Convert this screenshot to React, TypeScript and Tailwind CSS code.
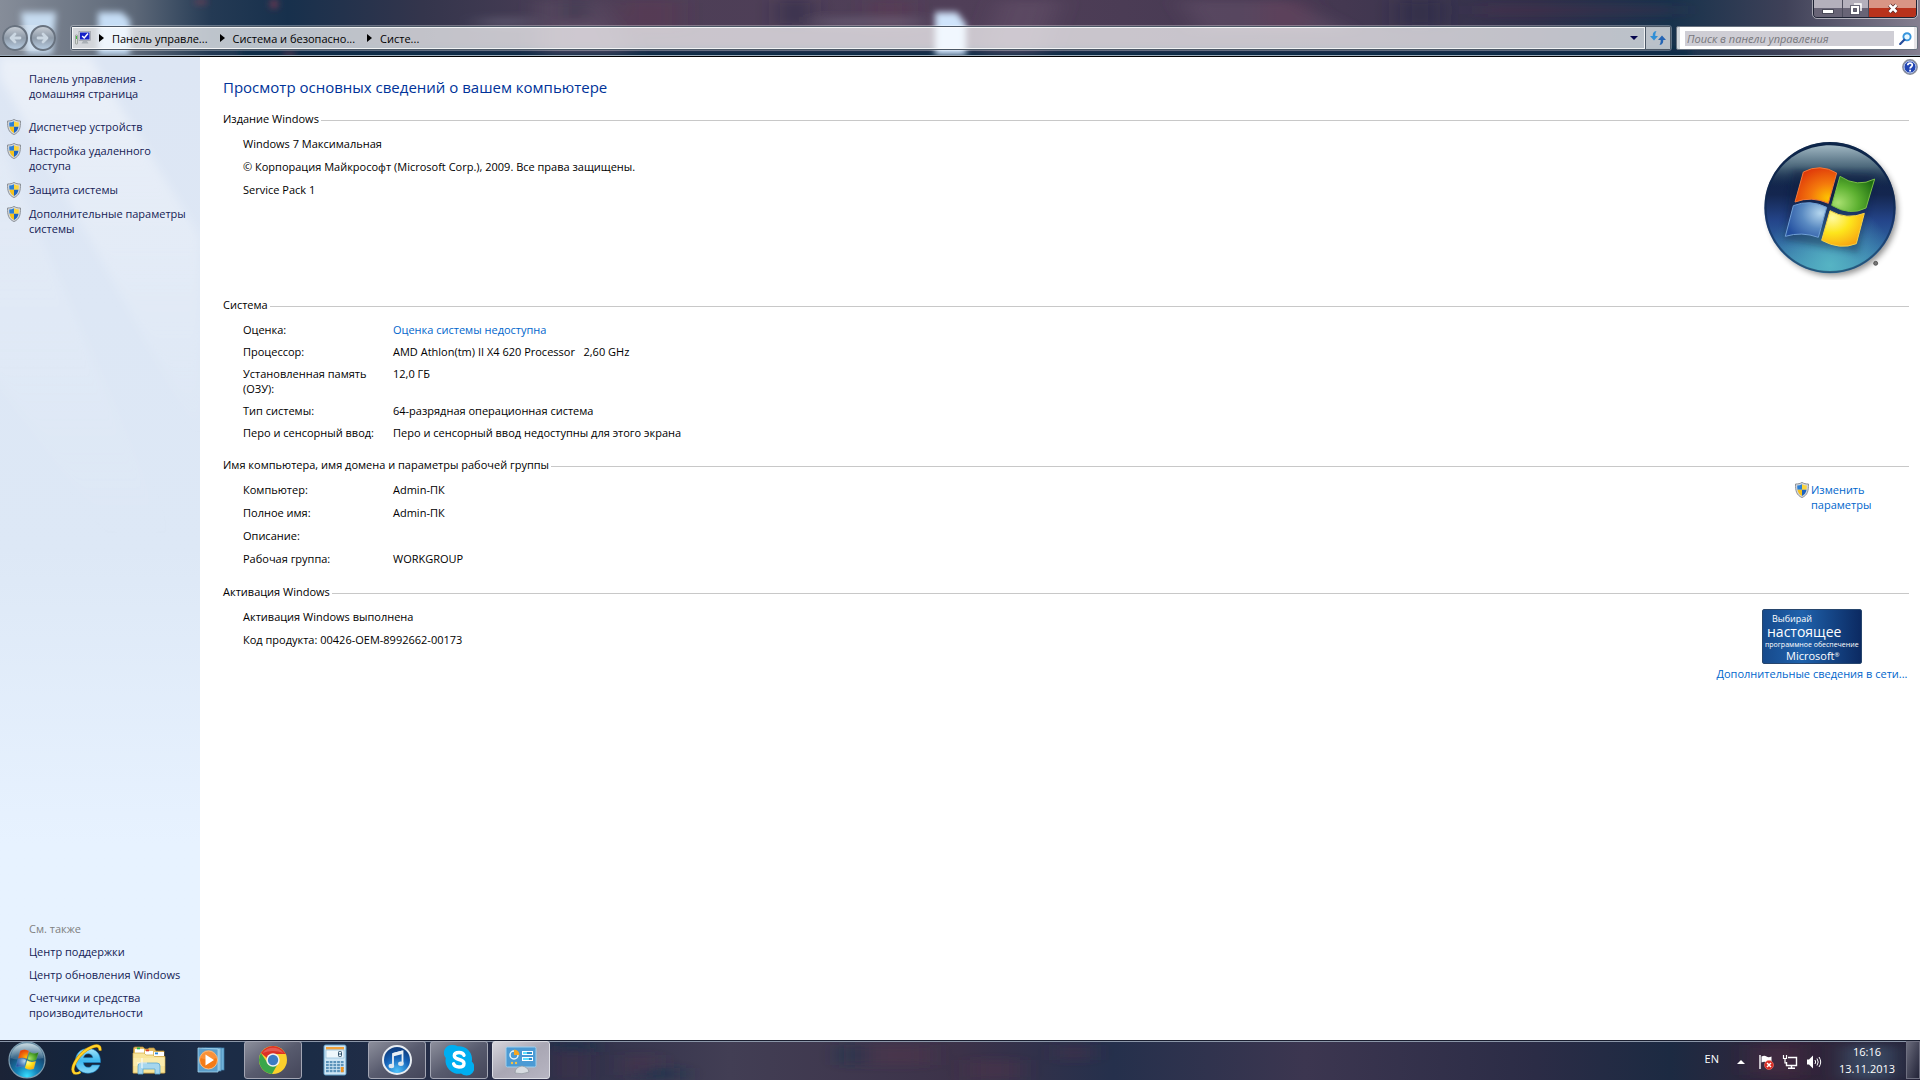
import React from 'react'

interface InfoRow {
  label: string
  value?: React.ReactNode
}

const shieldTasks = [
  'Диспетчер устройств',
  'Настройка удаленного доступа',
  'Защита системы',
  'Дополнительные параметры системы',
]

const seeAlso = ['Центр поддержки', 'Центр обновления Windows', 'Счетчики и средства производительности']

const systemRows: InfoRow[] = [
  { label: 'Оценка:', value: <a href="#rating" className="text-[#0066cc]">Оценка системы недоступна</a> },
  { label: 'Процессор:', value: <>AMD Athlon(tm) II X4 620 Processor &nbsp; 2,60 GHz</> },
  { label: 'Установленная память (ОЗУ):', value: '12,0 ГБ' },
  { label: 'Тип системы:', value: '64-разрядная операционная система' },
  { label: 'Перо и сенсорный ввод:', value: 'Перо и сенсорный ввод недоступны для этого экрана' },
]

const nameRows: InfoRow[] = [
  { label: 'Компьютер:', value: 'Admin-ПК' },
  { label: 'Полное имя:', value: 'Admin-ПК' },
  { label: 'Описание:' },
  { label: 'Рабочая группа:', value: 'WORKGROUP' },
]

/* ---------- icons ---------- */

const Shield: React.FC = () => (
  <svg width="14" height="16" viewBox="0 0 14 16" className="flex-shrink-0">
    <path d="M7 .4C5.300 1.600 3 2 .5 2c0 7 .8 11 6.500 13.600C12.700 13 13.500 9 13.500 2 11 2 8.700 1.600 7 .4z" fill="#d5d8dc" stroke="#85898f" strokeWidth=".9" />
    <path d="M7 2.200C5.600 3 4 3.500 2.200 3.600c0 1.600.1 3 .3 4.200H7z" fill="#2b7fd6" />
    <path d="M7 2.200c1.400.8 3 1.300 4.800 1.400 0 1.600-.1 3-.3 4.200H7z" fill="#fcd53a" />
    <path d="M2.500 7.800c.5 3 1.800 4.800 4.500 6.200V7.800z" fill="#f5c21c" />
    <path d="M11.500 7.800c-.5 3-1.800 4.800-4.500 6.200V7.800z" fill="#1d63c0" />
  </svg>
)

const FlagPanes: React.FC = () => (
  <g>
    <path d="M190 157Q240 130 290 160L265 251Q215 228 165 247Z" fill="url(#paneRed)" stroke="#f2793a" strokeWidth="3" />
    <path d="M300 170Q352 205 404 178L378 265Q330 290 275 257Z" fill="url(#paneGreen)" stroke="#79c043" strokeWidth="3" />
    <path d="M160 258Q210 238 260 263L235 353Q185 335 136 350Z" fill="url(#paneBlue)" stroke="#6f9fd6" strokeWidth="3" />
    <path d="M270 273Q320 302 373 281L349 372Q300 392 245 362Z" fill="url(#paneYellow)" stroke="#f3d24a" strokeWidth="3" />
  </g>
)

const WindowsLogo: React.FC = () => (
  <svg width="144" height="144" viewBox="60 49 432 432" className="flex-shrink-0">
    <defs>
      <radialGradient id="paneRed" cx=".8" cy=".85" r=".9">
        <stop offset="0" stopColor="#fdc500" />
        <stop offset=".45" stopColor="#f47a0c" />
        <stop offset="1" stopColor="#e03a0a" />
      </radialGradient>
      <radialGradient id="paneGreen" cx=".15" cy=".75" r=".95">
        <stop offset="0" stopColor="#a8e070" />
        <stop offset=".5" stopColor="#5cb030" />
        <stop offset="1" stopColor="#1f6e12" />
      </radialGradient>
      <radialGradient id="paneBlue" cx=".85" cy=".3" r=".9">
        <stop offset="0" stopColor="#b4d6ee" />
        <stop offset=".5" stopColor="#5a8ac2" />
        <stop offset="1" stopColor="#2450a0" />
      </radialGradient>
      <radialGradient id="paneYellow" cx=".25" cy=".2" r=".95">
        <stop offset="0" stopColor="#fff9a0" />
        <stop offset=".45" stopColor="#fde51c" />
        <stop offset="1" stopColor="#f79a10" />
      </radialGradient>
      <linearGradient id="logoBody" x1="0" y1="0" x2="0" y2="1">
        <stop offset="0" stopColor="#0c2344" />
        <stop offset=".4" stopColor="#14264f" />
        <stop offset=".6" stopColor="#24458a" />
        <stop offset=".8" stopColor="#3068a2" />
        <stop offset="1" stopColor="#3f8cb4" />
      </linearGradient>
      <radialGradient id="logoGlow" cx=".5" cy=".95" r=".5">
        <stop offset="0" stopColor="#56b4c4" />
        <stop offset="1" stopColor="#56b4c4" stopOpacity="0" />
      </radialGradient>
      <linearGradient id="logoGloss" x1="0" y1="0" x2="0" y2="1">
        <stop offset="0" stopColor="#9fb6c1" />
        <stop offset=".5" stopColor="#4c687b" />
        <stop offset="1" stopColor="#122a4a" stopOpacity="0" />
      </linearGradient>
      <filter id="logoShadow" x="-20%" y="-20%" width="140%" height="140%">
        <feGaussianBlur stdDeviation="9" />
      </filter>
    </defs>
    <circle cx="279" cy="275" r="193" fill="#000" opacity=".45" filter="url(#logoShadow)" />
    <circle cx="270" cy="264" r="197" fill="url(#logoBody)" />
    <circle cx="270" cy="264" r="193" fill="url(#logoGlow)" />
    <circle cx="270" cy="264" r="193" fill="none" stroke="#0f2a50" strokeWidth="6" opacity=".55" />
    <path d="M88 205C118 120 195 77 270 77s152 43 182 128z" fill="url(#logoGloss)" />
    <path d="M160 150L404 165L355 400L130 360Z" fill="#0a1a3e" opacity=".4" filter="url(#logoShadow)" />
    <FlagPanes />
    <circle cx="407" cy="431" r="6" fill="#777" stroke="#333" strokeWidth="2" />
  </svg>
)

const StartOrb: React.FC = () => (
  <svg width="40" height="40" viewBox="0 0 40 40">
    <defs>
      <radialGradient id="orb" cx=".5" cy=".95" r=".85">
        <stop offset="0" stopColor="#37e0ff" />
        <stop offset=".35" stopColor="#1583b8" />
        <stop offset=".75" stopColor="#174a74" />
        <stop offset="1" stopColor="#5d87a0" />
      </radialGradient>
      <linearGradient id="orbGloss" x1="0" y1="0" x2="0" y2="1">
        <stop offset="0" stopColor="#d6e4ea" stopOpacity=".9" />
        <stop offset="1" stopColor="#86a6b8" stopOpacity=".25" />
      </linearGradient>
    </defs>
    <circle cx="20" cy="20" r="18" fill="url(#orb)" stroke="#7f9db0" strokeWidth="1.200" />
    <path d="M3.500 18C4.500 8.500 11 3.200 20 3.200S35.500 8.500 36.500 18C31 20 26 17 20 18.500 14 20 9 20 3.500 18z" fill="url(#orbGloss)" />
    <g transform="translate(-2.600 -2.400) scale(.084)">
      <FlagPanes />
    </g>
  </svg>
)

const ComputerIcon: React.FC = () => (
  <svg width="16" height="14" viewBox="0 0 16 14">
    <rect x=".5" y="4" width="2" height="9" rx=".6" fill="#d8dcd8" stroke="#7b817b" strokeWidth=".6" />
    <rect x="1" y="5" width="1" height="3" fill="#3fbf3f" />
    <rect x="4" y=".5" width="11.500" height="9" fill="#d9dde2" stroke="#8b9098" strokeWidth=".6" />
    <rect x="5" y="1.500" width="9.500" height="7" fill="#1420c8" />
    <path d="M7.200 5l2 2 3.800-4.500" fill="none" stroke="#fff" strokeWidth="1.500" />
    <path d="M8 10h4l1.500 2.500h-7z" fill="#aab0b6" />
  </svg>
)

const Chevron: React.FC = () => (
  <svg width="5" height="8" viewBox="0 0 5 8" className="flex-shrink-0">
    <path d="M0 0l5 4-5 4z" fill="#000" />
  </svg>
)

const RefreshIcon: React.FC = () => (
  <svg width="16" height="16" viewBox="0 0 16 16" className="flex-shrink-0">
    <path d="M6.500 1C3.500 1.200 2.600 3.500 2.800 6H0l4 4.500L8 6H5.300c0-2 .2-3.300 1.200-5z" fill="#2f8fd6" />
    <path d="M9.500 15c3-.2 3.900-2.500 3.700-5H16l-4-4.500L8 10h2.700c0 2-.2 3.300-1.200 5z" fill="#2465b4" />
  </svg>
)

const SearchIcon: React.FC = () => (
  <svg width="13" height="13" viewBox="0 0 13 13" className="flex-shrink-0">
    <circle cx="8" cy="4.800" r="3.600" fill="#e8f7ff" stroke="#3795dd" strokeWidth="1.900" />
    <path d="M5.300 7.800L1.200 12" stroke="#274e9c" strokeWidth="2.200" strokeLinecap="round" />
  </svg>
)

const IEIcon: React.FC = () => (
  <svg width="32" height="32" viewBox="0 0 32 32">
    <defs>
      <linearGradient id="ie" x1="0" y1="0" x2="0" y2="1">
        <stop offset="0" stopColor="#a6e6fb" />
        <stop offset=".5" stopColor="#3db7ee" />
        <stop offset="1" stopColor="#8ad9f8" />
      </linearGradient>
    </defs>
    <path d="M29.500 18.500H12.400c.2 3 2 4.800 4.700 4.800 2 0 3.300-.8 4-2.300h7.700c-1.600 5-6 8.200-11.800 8.200-7.500 0-12.600-5-12.600-12.200S9.600 4.500 17 4.500c8 0 12.900 5.500 12.500 14zM12.500 13.700h9.300c-.3-2.500-2-4-4.600-4-2.500 0-4.200 1.500-4.700 4z" fill="url(#ie)" stroke="#1b86c8" strokeWidth=".6" />
    <path d="M3.800 29.500C-2 25 8 8 21 3c5-2 8.500-1.500 8 3.500" fill="none" stroke="#c98a06" strokeWidth="3.200" />
    <path d="M3.800 29.500C-2 25 8 8 21 3c5-2 8.500-1.500 8 3.500M3.500 29c2 1.200 4 .2 6-1" fill="none" stroke="#ffd42a" strokeWidth="2.200" />
  </svg>
)

const ExplorerIcon: React.FC = () => (
  <svg width="34" height="32" viewBox="0 0 34 32">
    <path d="M1.500 6V4.500Q1.500 3 3 3h8l2 2h3l1-1h5l2 3h8v22H1.500z" fill="#e4bd62" stroke="#b98d35" strokeWidth=".7" />
    <path d="M3 5h9v4H3zM13 7h8v4h-8zM22 8h10v4H22z" fill="#fff" />
    <rect x="5" y="3.500" width="3" height="1.800" fill="#24b54a" />
    <rect x="14" y="5.500" width="3" height="1.800" fill="#dc3c28" />
    <rect x="23" y="8.500" width="3" height="1.800" fill="#2386dc" />
    <path d="M1 9h11l2 2h7l1.500 1.500H33V29H1z" fill="#f8e499" stroke="#d3ac4e" strokeWidth=".7" />
    <path d="M1.500 14h31v8h-31z" fill="#fbeeb4" opacity=".7" />
    <path d="M6 30v-8q0-3 3-3h16q3 0 3 3v8h-5v-5H11v5z" fill="#a5d6ee" stroke="#5ba7cf" strokeWidth=".8" />
    <path d="M10 14v10M5 19h10" stroke="#fff" strokeWidth="1.200" opacity=".8" />
  </svg>
)

const MediaPlayerIcon: React.FC = () => (
  <svg width="28" height="28" viewBox="0 0 28 28">
    <rect x="8" y="2" width="19" height="22" fill="#6fb1d8" stroke="#3f82b0" strokeWidth=".7" />
    <rect x="5" y="2" width="19" height="23" fill="#8fc6e4" stroke="#3f82b0" strokeWidth=".7" />
    <path d="M1 2l20 1v23H1z" fill="#5c9fcb" stroke="#a5d4ee" strokeWidth=".8" />
    <circle cx="11.500" cy="14" r="9" fill="#f47b16" stroke="#ffc48a" strokeWidth=".9" />
    <path d="M3.500 12a8 8 0 0 1 16 0q-8 3-16 0z" fill="#ffa85a" opacity=".5" />
    <path d="M8.500 8.500v11l8.500-5.500z" fill="#fff" />
  </svg>
)

const ChromeIcon: React.FC = () => (
  <svg width="30" height="30" viewBox="0 0 30 30">
    <circle cx="15" cy="15" r="14" fill="#fbd02c" />
    <path d="M2.900 8A14 14 0 0 1 27.100 8L28 9H15a6.400 6.400 0 0 0-6 4z" fill="#dc3226" />
    <path d="M2.900 8A14 14 0 0 0 14 29l6-10.500a6.400 6.400 0 0 1-10.800-1z" fill="#3aa64b" />
    <circle cx="15" cy="15" r="6.700" fill="#f2f2f2" />
    <circle cx="15" cy="15" r="5.200" fill="#3d7cc4" />
    <path d="M4.500 8A13 13 0 0 1 25.500 8Q15 4 4.500 8z" fill="#fff" opacity=".2" />
  </svg>
)

const CalculatorIcon: React.FC = () => (
  <svg width="24" height="32" viewBox="0 0 24 32">
    <rect x="1" y="1" width="22" height="30" rx="1.500" fill="#cfe6f5" stroke="#5e9cc5" />
    <rect x="3" y="3" width="18" height="2.500" fill="#f0a13a" />
    <rect x="3" y="6" width="18" height="8" fill="#eef7fc" stroke="#8bb8d6" strokeWidth=".7" />
    <rect x="15.500" y="7.500" width="3" height="5" rx=".8" fill="none" stroke="#35556e" />
    <path d="M15.500 10h3" stroke="#35556e" />
    {[17, 20, 23, 26].map(y => [3, 6.700, 10.400, 14.100, 17.800].map(x => (
      <rect key={`${x}-${y}`} x={x} y={y} width="2.800" height="2.200" fill="#5c93ba" />
    )))}
    <rect x="17.800" y="23" width="2.800" height="5.200" fill="#f0931e" />
  </svg>
)

const ITunesIcon: React.FC = () => (
  <svg width="32" height="32" viewBox="0 0 32 32">
    <defs>
      <radialGradient id="itunes" cx=".5" cy=".9" r=".8">
        <stop offset="0" stopColor="#4fc3fb" />
        <stop offset=".6" stopColor="#1663b8" />
        <stop offset="1" stopColor="#0f3f82" />
      </radialGradient>
    </defs>
    <circle cx="16" cy="16" r="14" fill="url(#itunes)" stroke="#e8edf2" strokeWidth="2" />
    <path d="M12 22V10l9.500-2.500v12" fill="none" stroke="#e9eff5" strokeWidth="1.800" />
    <path d="M12 9l9.500-2.500v3.500L12 12.500z" fill="#e9eff5" />
    <ellipse cx="10.400" cy="22" rx="2.800" ry="2.200" fill="#dfe7ef" />
    <ellipse cx="19.900" cy="19.800" rx="2.800" ry="2.200" fill="#dfe7ef" />
  </svg>
)

const SkypeIcon: React.FC = () => (
  <svg width="30" height="32" viewBox="0 0 30 32">
    <path d="M9 1a8 8 0 0 1 4.500 1.300A13 13 0 0 1 27.800 17.500 7.800 7.800 0 0 1 17 29.500 13 13 0 0 1 1.800 14 8 8 0 0 1 9 1z" fill="#00aef0" />
    <path d="M20 11.300c-.7-2-2.600-2.800-5-2.800-2.800 0-4.700 1.200-4.700 3.300 0 4.800 9.700 2.600 9.700 7.600 0 2.200-2 3.600-5 3.600-2.700 0-4.700-1-5.400-3.200" fill="none" stroke="#fff" strokeWidth="3.400" strokeLinecap="round" />
  </svg>
)

const ControlPanelIcon: React.FC = () => (
  <svg width="32" height="30" viewBox="0 0 32 30">
    <rect x="1" y="2" width="30" height="20" rx="1.500" fill="#4b9ad4" stroke="#9fd0ee" />
    <circle cx="9" cy="10" r="4" fill="none" stroke="#e6f4fc" strokeWidth="1.500" />
    <path d="M9 10V4.500a5.500 5.500 0 0 1 5.500 5.500z" fill="#f5a623" />
    <rect x="17.500" y="6.500" width="10" height="3" fill="#2e8fcc" stroke="#fff" />
    <rect x="17.500" y="12.500" width="10" height="3" fill="#2e8fcc" stroke="#fff" />
    <path d="M18 8h4M18 14h6" stroke="#5fe0ff" strokeWidth="2" />
    <circle cx="7" cy="18" r="1.200" fill="#f6c145" />
    <circle cx="11" cy="18" r="1.200" fill="#f6c145" />
    <path d="M10 28q0-6 7-7 6 1 7 6-7 3-14 1z" fill="#d7dbe0" stroke="#8f969e" strokeWidth=".7" />
  </svg>
)

/* ---------- window chrome ---------- */

// Blurred desktop showing through the glass
const GlassHeader: React.FC = () => (
  <svg className="absolute inset-0 w-full h-full" viewBox="0 0 1920 55" preserveAspectRatio="none">
    <defs>
      <linearGradient id="glass" x1="0" y1="0" x2="1" y2="0">
        <stop offset="0" stopColor="#868d99" />
        <stop offset=".07" stopColor="#5d6878" />
        <stop offset=".11" stopColor="#243a54" />
        <stop offset=".15" stopColor="#17304c" />
        <stop offset=".22" stopColor="#34354c" />
        <stop offset=".3" stopColor="#4c3e56" />
        <stop offset=".5" stopColor="#503f58" />
        <stop offset=".7" stopColor="#443851" />
        <stop offset=".8" stopColor="#30304a" />
        <stop offset=".87" stopColor="#17324c" />
        <stop offset=".93" stopColor="#3f4158" />
        <stop offset="1" stopColor="#857f90" />
      </linearGradient>
      <filter id="soft" x="-20%" y="-50%" width="140%" height="200%"><feGaussianBlur stdDeviation="3" /></filter>
      <filter id="wide" x="-20%" y="-50%" width="140%" height="200%"><feGaussianBlur stdDeviation="12 4" /></filter>
    </defs>
    <rect width="1920" height="55" fill="url(#glass)" />
    <rect x="240" y="48" width="1450" height="14" fill="#0f2c47" filter="url(#soft)" />
    <g filter="url(#wide)">
      <path d="M540 0h60l30 55h-90zM1000 0h60l-20 55h-60zM1180 0h110l60 30H1200z" fill="#6d5970" opacity=".4" />
      <path d="M620 0h60v30h-60zM870 0h40v30h-40zM1260 0h50v30h-50zM1480 6h200v8h-200z" fill="#6b3450" opacity=".25" />
      <path d="M560 0h30v20h-30zM1400 0h40v26h-40zM780 0h30v25h-30z" fill="#2b2d48" opacity=".5" />
      <path d="M480 19h50v5h-50zM820 19h100v5h-100z" fill="#8d8ba0" opacity=".5" />
    </g>
    <g filter="url(#soft)">
      <path d="M21 12h35l-4 41H26z" fill="#c6dbf0" />
      <path d="M98 12h24l8 8v34H98z" fill="#c6def6" />
      <path d="M935 12h22l9 12v30h-31z" fill="#cfe4fb" />
      <path d="M195 0h12v4h-12zM270 0h8v8h-8zM283 51h12v4h-12z" fill="#9b3a52" opacity=".6" />
    </g>
  </svg>
)

const ExplorerBar: React.FC = () => (
  <header className="relative h-[57px] flex-shrink-0 border-b border-black">
    <GlassHeader />
    <div className="relative h-full border-b border-[#9aa9b8] flex items-center gap-[5px] px-[2px] pt-[21px]">
      <nav className="flex items-center gap-[2px] h-[26px] rounded-full bg-white/20" aria-label="Навигация">
        {['M13 8H4M8 4L4 8l4 4', 'M3 8h9M8 4l4 4-4 4'].map((d, i) => (
          <button
            key={d}
            aria-label={i === 0 ? 'Назад' : 'Вперед'}
            className="w-[26px] h-[26px] rounded-full border-2 border-[#68727f] bg-linear-to-b from-[#c5ccd4] via-[#8e9aa8] to-[#b6cbe0] flex items-center justify-center"
          >
            <svg width="16" height="16" viewBox="0 0 16 16" className="flex-shrink-0">
              <path d={d} fill="none" stroke="#cbd7e2" strokeWidth="2.800" strokeLinecap="round" strokeLinejoin="round" />
            </svg>
          </button>
        ))}
      </nav>

      {/* Address bar */}
      <div className="ml-[10px] flex-1 min-w-0 h-[24px] rounded-[2px] border border-[#4c5866] outline outline-white/30 flex">
        <div className="flex-1 min-w-0 border border-white/80 bg-white/70 flex items-center pl-[2px] text-black">
          <ComputerIcon />
          <span className="ml-[8px]"><Chevron /></span>
          <button className="ml-[8px]">Панель управле...</button>
          <span className="ml-[12px]"><Chevron /></span>
          <button className="ml-[8px]">Система и безопасно...</button>
          <span className="ml-[12px]"><Chevron /></span>
          <button className="ml-[8px]">Систе...</button>
          <button className="ml-auto w-[20px] h-full flex items-center justify-center" aria-label="Предыдущие расположения">
            <svg width="8" height="4" viewBox="0 0 8 4"><path d="M0 0h8L4 4z" fill="#06064e" /></svg>
          </button>
        </div>
        <button className="w-[25px] border-l border-l-[#4c5866] bg-white/70 flex items-center justify-center" aria-label="Обновить">
          <RefreshIcon />
        </button>
      </div>

      {/* Search */}
      <div className="w-[242px] h-[24px] border border-[#68727f] rounded-[2px] flex bg-white/80 px-[3px]">
        <label className="flex-1 min-w-0 bg-white flex items-center pl-[5px] pr-[2px] gap-[5px]">
          <input
            type="search"
            aria-label="Поиск в панели управления"
            placeholder="Поиск в панели управления"
            className="flex-1 min-w-0 h-[15px] px-[2px] bg-[#cfced5] italic text-[11px] leading-[15px] placeholder:text-[#77777c] outline-none"
          />
          <SearchIcon />
        </label>
      </div>
    </div>

    {/* Caption buttons */}
    <div className="absolute top-0 right-[3px] h-[18px] flex rounded-b-[4px] border border-t-0 border-[#1d2233] outline outline-white/50 overflow-hidden">
      <button className="w-[29px] border-r border-[#4c4c5c] bg-linear-to-b from-[#b4b0bc] from-45% to-[#686476] to-50% flex items-center justify-center" aria-label="Свернуть">
        <svg width="12" height="12" viewBox="0 0 12 12"><rect x=".5" y="6.500" width="11" height="4" fill="#fff" stroke="#4a4a58" /></svg>
      </button>
      <button className="w-[26px] border-r border-[#4c4c5c] bg-linear-to-b from-[#b4b0bc] from-45% to-[#686476] to-50% flex items-center justify-center" aria-label="Свернуть в окно">
        <svg width="12" height="12" viewBox="0 0 12 12">
          <path d="M4 1h7v7" fill="none" stroke="#fff" strokeWidth="1.500" />
          <rect x="2" y="4" width="6" height="6" fill="none" stroke="#444456" strokeWidth="3.600" />
          <rect x="2" y="4" width="6" height="6" fill="none" stroke="#fff" strokeWidth="2.200" />
        </svg>
      </button>
      <button className="w-[47px] bg-linear-to-b from-[#d99585] from-45% to-[#b8321c] to-50% flex items-center justify-center" aria-label="Закрыть">
        <svg width="12" height="11" viewBox="0 0 12 11">
          <path d="M2.500 2l7 7M9.500 2l-7 7" stroke="#5a2a2a" strokeWidth="4" />
          <path d="M2.500 2l7 7M9.500 2l-7 7" stroke="#fff" strokeWidth="2.600" />
        </svg>
      </button>
    </div>
  </header>
)

const Sidebar: React.FC = () => (
  <aside className="relative w-[200px] flex-shrink-0 bg-linear-to-b from-[#dde6f4] via-[#dde8f6] via-50% to-[#e7f2ff] to-80% text-[#151c55]">
    <svg className="absolute inset-x-0 top-0 w-full h-[560px]" viewBox="0 0 200 560" preserveAspectRatio="none">
      <defs>
        <linearGradient id="streak" x1="0" y1="0" x2="0" y2="1">
          <stop offset="0" stopColor="#fff" stopOpacity=".4" />
          <stop offset="1" stopColor="#fff" stopOpacity="0" />
        </linearGradient>
        <filter id="haze"><feGaussianBlur stdDeviation="5" /></filter>
      </defs>
      <g filter="url(#haze)">
        <path d="M0 0h90L200 180v200L0 20z" fill="url(#streak)" />
        <path d="M-20 40l190 440h-60L-20 300z" fill="url(#streak)" opacity=".5" />
      </g>
    </svg>
    <div className="relative h-full flex flex-col justify-between pt-[14px] pb-[20px]">
      <div>
        <a href="#home" className="block ml-[29px] w-[130px]">Панель управления - домашняя страница</a>
        <ul className="mt-[18px] flex flex-col gap-[9px]">
          {shieldTasks.map(t => (
            <li key={t} className="flex items-start gap-[8px] pl-[7px] pr-[8px]">
              {/* icon is 1px taller than a text line, keep it from stretching the row */}
              <span className="h-[15px]"><Shield /></span>
              <a href="#task">{t}</a>
            </li>
          ))}
        </ul>
      </div>
      <div className="pl-[29px] pr-[8px] flex flex-col gap-[8px]">
        <span className="text-[#808080]">См. также</span>
        {seeAlso.map(t => <a key={t} href="#see-also">{t}</a>)}
      </div>
    </div>
  </aside>
)

/* ---------- content ---------- */

const Section: React.FC<{ title: string; className?: string; children: React.ReactNode }> = ({ title, className, children }) => (
  <section className={className}>
    <h2 className="flex items-center gap-[2px]">
      {title}
      <span className="flex-1 h-px mt-[4px] bg-[#c8c8c8]" />
    </h2>
    <div className="mt-[10px] pl-[20px] flex justify-between items-start">{children}</div>
  </section>
)

const InfoList: React.FC<{ rows: InfoRow[]; gap: string }> = ({ rows, gap }) => (
  <dl className={`flex flex-col ${gap}`}>
    {rows.map(r => (
      <div key={r.label} className="flex">
        <dt className="w-[150px] pr-[10px]">{r.label}</dt>
        <dd>{r.value}</dd>
      </div>
    ))}
  </dl>
)

const GenuineBadge: React.FC = () => (
  <div className="w-[100px] h-[55px] overflow-hidden rounded-[2px] border border-[#27466e] bg-linear-to-r from-[#174a8c] via-[#1f62ac] via-40% to-[#0c2a62] text-white whitespace-nowrap">
    <div className="pl-[9px] pt-[3px] text-[9px] leading-[11px]">Выбирай</div>
    <div className="pl-[4px] text-[14px] leading-[16px]">настоящее</div>
    <div className="pl-[2px] text-[7px] leading-[10px]">программное обеспечение</div>
    <div className="pl-[23px] text-[11px] leading-[12px] font-medium">Microsoft<sup className="text-[6px]">®</sup></div>
  </div>
)

const Content: React.FC = () => (
  <main className="flex-1 min-w-0 bg-white text-black pt-[2px] pr-[11px] pl-[23px]">
    <div className="flex justify-end -mr-[9px]">
      <button aria-label="Справка">
        <svg width="16" height="16" viewBox="0 0 16 16" className="block">
          <circle cx="8" cy="8" r="7.200" fill="#2145b4" stroke="#8c8f98" strokeWidth="1.400" />
          <circle cx="8" cy="8" r="6" fill="none" stroke="#c9d4ee" />
          <path d="M5.800 6.200C5.800 3.300 10.300 3.400 10.300 6c0 1.700-2.200 1.800-2.200 3.600" fill="none" stroke="#fff" strokeWidth="1.700" />
          <rect x="7.200" y="10.700" width="1.800" height="1.800" fill="#fff" />
        </svg>
      </button>
    </div>
    <h1 className="mt-[2px] mb-[14px] text-[15px] leading-[20px] text-[#003399]">Просмотр основных сведений о вашем компьютере</h1>

    <Section title="Издание Windows" className="min-h-[186px]">
      <div className="flex flex-col gap-[8px]">
        <p>Windows 7 Максимальная</p>
        <p>© Корпорация Майкрософт (Microsoft Corp.), 2009. Все права защищены.</p>
        <p>Service Pack 1</p>
      </div>
      <div className="mr-[5px]"><WindowsLogo /></div>
    </Section>

    <Section title="Система">
      <InfoList rows={systemRows} gap="gap-[7px]" />
    </Section>

    <Section title="Имя компьютера, имя домена и параметры рабочей группы" className="mt-[17px]">
      <InfoList rows={nameRows} gap="gap-[8px]" />
      <a href="#change" className="w-[114px] pr-[30px] flex gap-[2px] text-[#0066cc]">
        <Shield />
        Изменить параметры
      </a>
    </Section>

    <Section title="Активация Windows" className="mt-[18px]">
      <div className="flex flex-col gap-[8px]">
        <p>Активация Windows выполнена</p>
        <p>Код продукта: 00426-OEM-8992662-00173</p>
      </div>
      <div className="w-[194px] flex flex-col items-center gap-[2px]">
        <GenuineBadge />
        <a href="#more" className="text-[#0066cc]">Дополнительные сведения в сети...</a>
      </div>
    </Section>
  </main>
)

/* ---------- taskbar ---------- */

const taskbarItems = [
  { name: 'Internet Explorer', icon: <IEIcon />, state: 'pinned' },
  { name: 'Проводник', icon: <ExplorerIcon />, state: 'pinned' },
  { name: 'Проигрыватель', icon: <MediaPlayerIcon />, state: 'pinned' },
  { name: 'Chrome', icon: <ChromeIcon />, state: 'open' },
  { name: 'Калькулятор', icon: <CalculatorIcon />, state: 'pinned' },
  { name: 'iTunes', icon: <ITunesIcon />, state: 'open' },
  { name: 'Skype', icon: <SkypeIcon />, state: 'open' },
  { name: 'Система', icon: <ControlPanelIcon />, state: 'active' },
]

const stateClass: Record<string, string> = {
  pinned: 'border-transparent',
  open: 'border-[#a3a6b4] bg-linear-to-br from-[#8d8f9c] via-[#585b6e] to-[#44465a]',
  active: 'border-[#dcdde4] bg-linear-to-br from-[#d6d5dc] via-[#a9a7b4] to-[#b7b5c2]',
}

const GlassTaskbar: React.FC = () => (
  <svg className="absolute inset-0 w-full h-full" viewBox="0 0 1920 40" preserveAspectRatio="none">
    <defs>
      <linearGradient id="bar" x1="0" y1="0" x2="1" y2="0">
        <stop offset="0" stopColor="#1b2336" />
        <stop offset=".04" stopColor="#14253d" />
        <stop offset=".1" stopColor="#1c2c46" />
        <stop offset=".16" stopColor="#1b2c46" />
        <stop offset=".28" stopColor="#2c2e48" />
        <stop offset=".38" stopColor="#423e54" />
        <stop offset=".5" stopColor="#3c3249" />
        <stop offset=".58" stopColor="#25304c" />
        <stop offset=".68" stopColor="#3c3650" />
        <stop offset=".8" stopColor="#2b2c46" />
        <stop offset=".87" stopColor="#1c2a42" />
        <stop offset=".93" stopColor="#33253a" />
        <stop offset="1" stopColor="#232238" />
      </linearGradient>
    </defs>
    <rect width="1920" height="40" fill="url(#bar)" />
    <g filter="url(#wide)">
      <path d="M560 8h20v32h-20zM625 15h30v20h-30zM870 5h60v20h-60zM970 20h50v20h-50zM1060 5h30v15h-30zM1750 5h50v30h-50z" fill="#5c3048" opacity=".35" />
      <path d="M560 0h30v12h-30zM640 28h40v12h-40zM845 5h20v20h-20z" fill="#10304c" opacity=".6" />
      <path d="M1845 5h50v35h-50z" fill="#44627e" opacity=".6" />
    </g>
    <rect width="1920" height="1" fill="#1a1f30" />
    <rect y="1" width="1920" height="1" fill="#8b96a8" />
  </svg>
)

const Taskbar: React.FC = () => (
  <footer className="relative h-[40px] flex-shrink-0 text-white">
    <GlassTaskbar />
    <div className="relative h-full flex items-stretch">
      <button className="w-[54px] flex items-center justify-center" aria-label="Пуск"><StartOrb /></button>
      <div className="flex flex-1 items-center gap-[4px] pl-[4px]">
        {taskbarItems.map(item => (
          <button
            key={item.name}
            aria-label={item.name}
            className={`w-[58px] h-[38px] rounded-[3px] border flex items-center justify-center ${stateClass[item.state]}`}
          >
            {item.icon}
          </button>
        ))}
      </div>

      {/* Notification area */}
      <div className="flex items-center">
        <button className="mr-[18px] mb-[4px]" aria-label="Язык ввода">EN</button>
        <button className="mr-[13px] mt-[3px]" aria-label="Показать скрытые значки">
          <svg width="8" height="4" viewBox="0 0 8 4"><path d="M4 0l4 4H0z" fill="#fff" /></svg>
        </button>
        <button className="mr-[8px] mt-[3px]" aria-label="Центр поддержки">
          <svg width="16" height="16" viewBox="0 0 16 16">
            <path d="M2 1v14" stroke="#fff" strokeWidth="1.400" />
            <path d="M3.500 2.500q3-1.500 5 0t5 0v6q-3 1.500-5 0t-5 0z" fill="#fff" />
            <circle cx="11" cy="11" r="4.500" fill="#d8281e" stroke="#ee8078" strokeWidth=".6" />
            <path d="M9 9l4 4M13 9l-4 4" stroke="#fff" strokeWidth="1.500" />
          </svg>
        </button>
        <button className="mr-[8px] mt-[3px]" aria-label="Сеть">
          <svg width="16" height="16" viewBox="0 0 16 16" fill="none" stroke="#fff">
            <path d="M6 3.500h8.500v8H4.500V8" strokeWidth="1.400" />
            <path d="M6 14.300h7M9.500 12v2" strokeWidth="1.400" />
            <path d="M1.500 1v3.500h3V1M3 4.500V9h1.500" strokeWidth="1.200" />
          </svg>
        </button>
        <button className="mt-[3px]" aria-label="Громкость">
          <svg width="16" height="16" viewBox="0 0 16 16">
            <path d="M1 5.500h2L7 1.500v13l-4-4H1z" fill="#fff" />
            <path d="M9 6q1.300 2 0 4M11 4.500q2.400 3.500 0 7M13 3q3.400 5 0 10" fill="none" stroke="#fff" />
          </svg>
        </button>
        <div className="ml-[6px] w-[78px] text-center leading-[17px]">
          <div>16:16</div>
          <div>13.11.2013</div>
        </div>
      </div>
      <button className="self-center w-[14px] h-[38px] border border-[#6e6f80] bg-linear-to-br from-[#6b6c7c] to-[#232438]" aria-label="Свернуть все окна" />
    </div>
  </footer>
)

export default function App() {
  return (
    <div className="h-screen flex flex-col font-['Open_Sans','Noto_Sans',sans-serif] text-[11px] leading-[15px]">
      <ExplorerBar />
      <div className="flex-1 min-h-0 flex">
        <Sidebar />
        <Content />
      </div>
      <Taskbar />
    </div>
  )
}
